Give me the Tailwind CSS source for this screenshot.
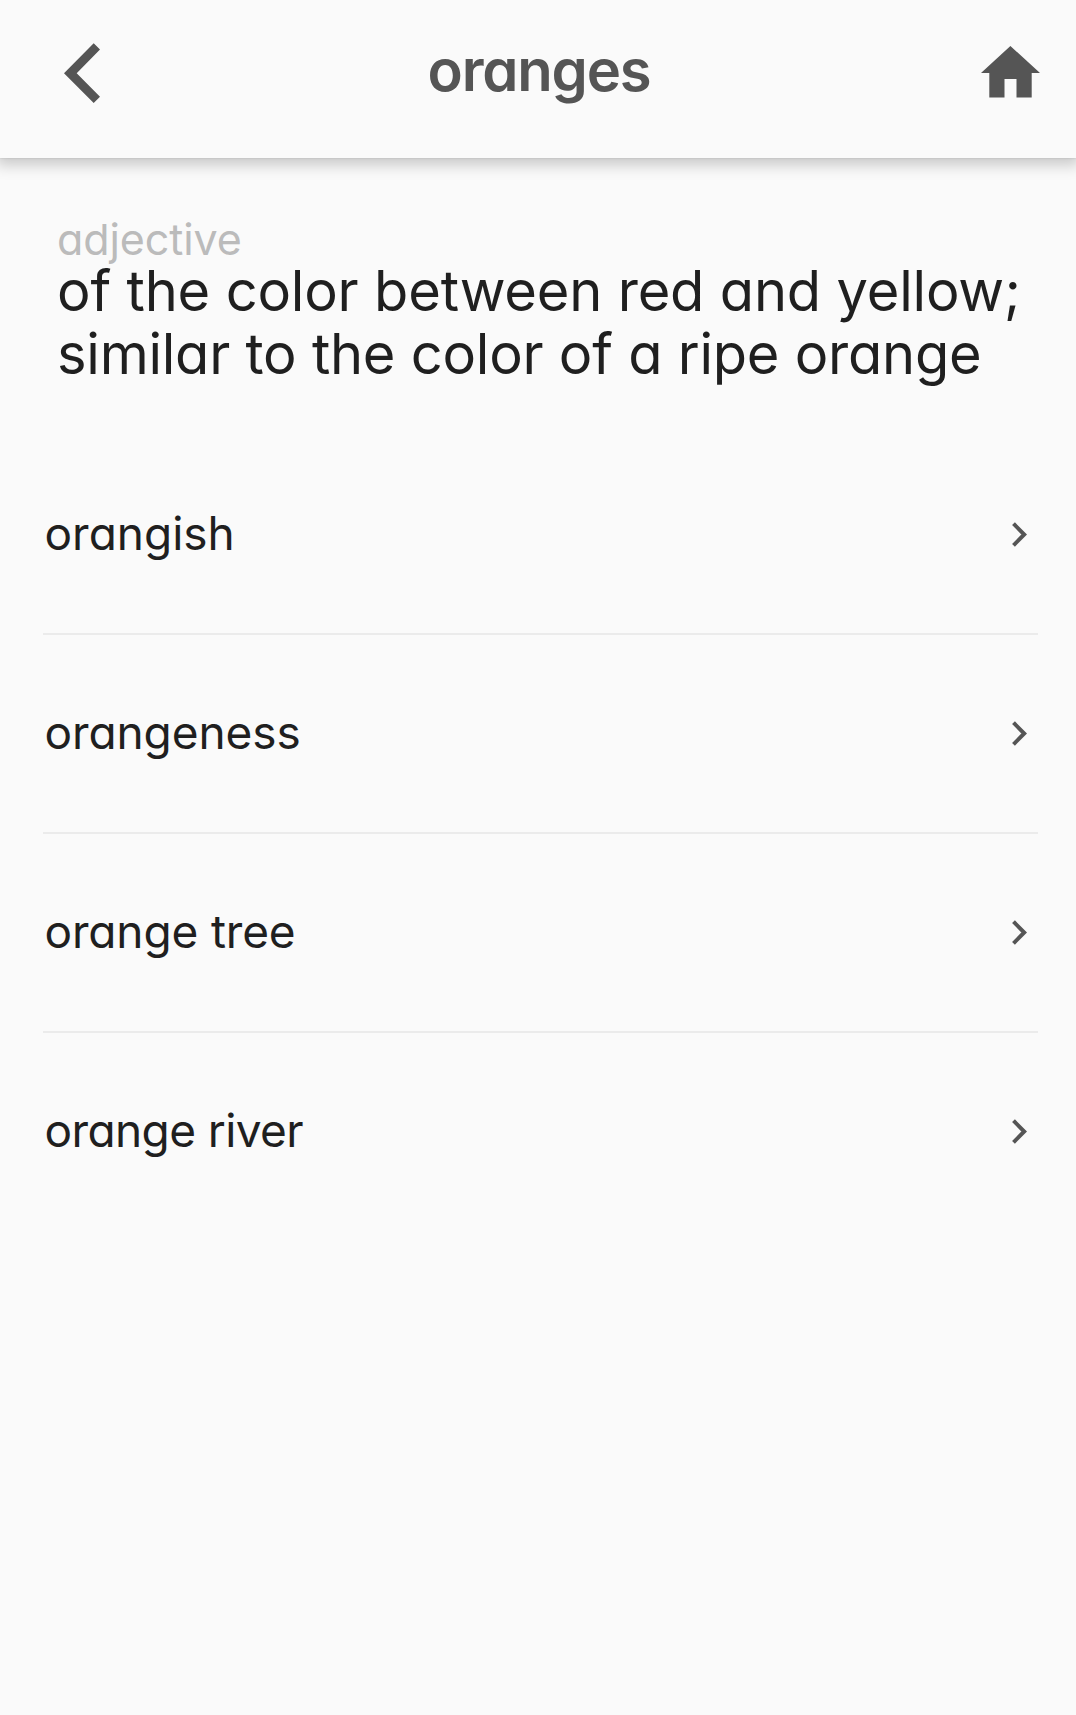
<!DOCTYPE html>
<html lang="en">
<head>
<meta charset="utf-8">
<title>oranges</title>
<script src="https://cdn.jsdelivr.net/npm/@tailwindcss/browser@4"></script>
</head>
<body class="min-h-screen overflow-x-hidden bg-[#fafafa] font-['Inter',sans-serif] text-[#1f1f1f] [font-feature-settings:'cv11']">
<header class="grid h-[158px] grid-cols-[100px_1fr_100px] bg-[#fafafa] pt-[43px] shadow-[0_0_2px_rgba(0,0,0,0.14),0_3px_14px_4px_rgba(0,0,0,0.2)]">
  <button class="ml-16 h-[60px] w-9" aria-label="Back">
    <svg class="h-[60px] w-9" viewBox="0 0 36 60" fill="#555"><path d="M29.7 .3 0 30.2 29.7 60 36 53.8 12.7 30.2 36 6.5z"/></svg>
  </button>
  <h1 class="pl-[2px] text-center text-[58px] leading-[54px] font-semibold tracking-[-1.2px] text-[#555]">oranges</h1>
  <a class="mt-[3px] ml-[5px] h-[52px] w-[59px]" aria-label="Home">
    <svg class="h-[52px] w-[59px]" viewBox="0 0 59 52" fill="#555"><path d="M29.4 0 0 27h8.3v24.4h15.2V33h12v18.4h15.2V27H59z"/></svg>
  </a>
</header>
<main>
  <section class="pt-[57px] pl-[57px] whitespace-nowrap">
    <p class="h-[45px] text-[43px] leading-[48px] tracking-[-0.1px] text-[#bbb]">adjective</p>
    <p class="text-[56px] leading-[63px]"><span class="tracking-[-0.18px]">of the color between red and yellow;</span><br><span class="tracking-[-0.24px]">similar to the color of a ripe orange</span></p>
  </section>
  <ul class="mt-[50px] ml-[42.5px] w-[995px] divide-y-2 divide-[#ebebeb] text-[46px]">
    <li class="flex h-[199px] items-center justify-between pr-[11px] pl-[2px]"><span class="-mt-[3px]">orangish</span><svg class="h-[25px] w-[15px]" viewBox="0 0 15 25" fill="none" stroke="#555" stroke-width="4"><path d="M1.5 1.7 12.2 12.5 1.5 23.3"/></svg></li>
    <li class="flex h-[199px] items-center justify-between pr-[11px] pl-[2px]"><span class="-mt-[3px] tracking-[-0.1px]">orangeness</span><svg class="h-[25px] w-[15px]" viewBox="0 0 15 25" fill="none" stroke="#555" stroke-width="4"><path d="M1.5 1.7 12.2 12.5 1.5 23.3"/></svg></li>
    <li class="flex h-[199px] items-center justify-between pr-[11px] pl-[2px]"><span class="-mt-[3px] tracking-[-0.15px]">orange tree</span><svg class="h-[25px] w-[15px]" viewBox="0 0 15 25" fill="none" stroke="#555" stroke-width="4"><path d="M1.5 1.7 12.2 12.5 1.5 23.3"/></svg></li>
    <li class="flex h-[199px] items-center justify-between pr-[11px] pl-[2px]"><span class="-mt-[4px] tracking-[-0.6px]">orange river</span><svg class="-mt-[2px] h-[25px] w-[15px]" viewBox="0 0 15 25" fill="none" stroke="#555" stroke-width="4"><path d="M1.5 1.7 12.2 12.5 1.5 23.3"/></svg></li>
  </ul>
</main>
</body>
</html>
